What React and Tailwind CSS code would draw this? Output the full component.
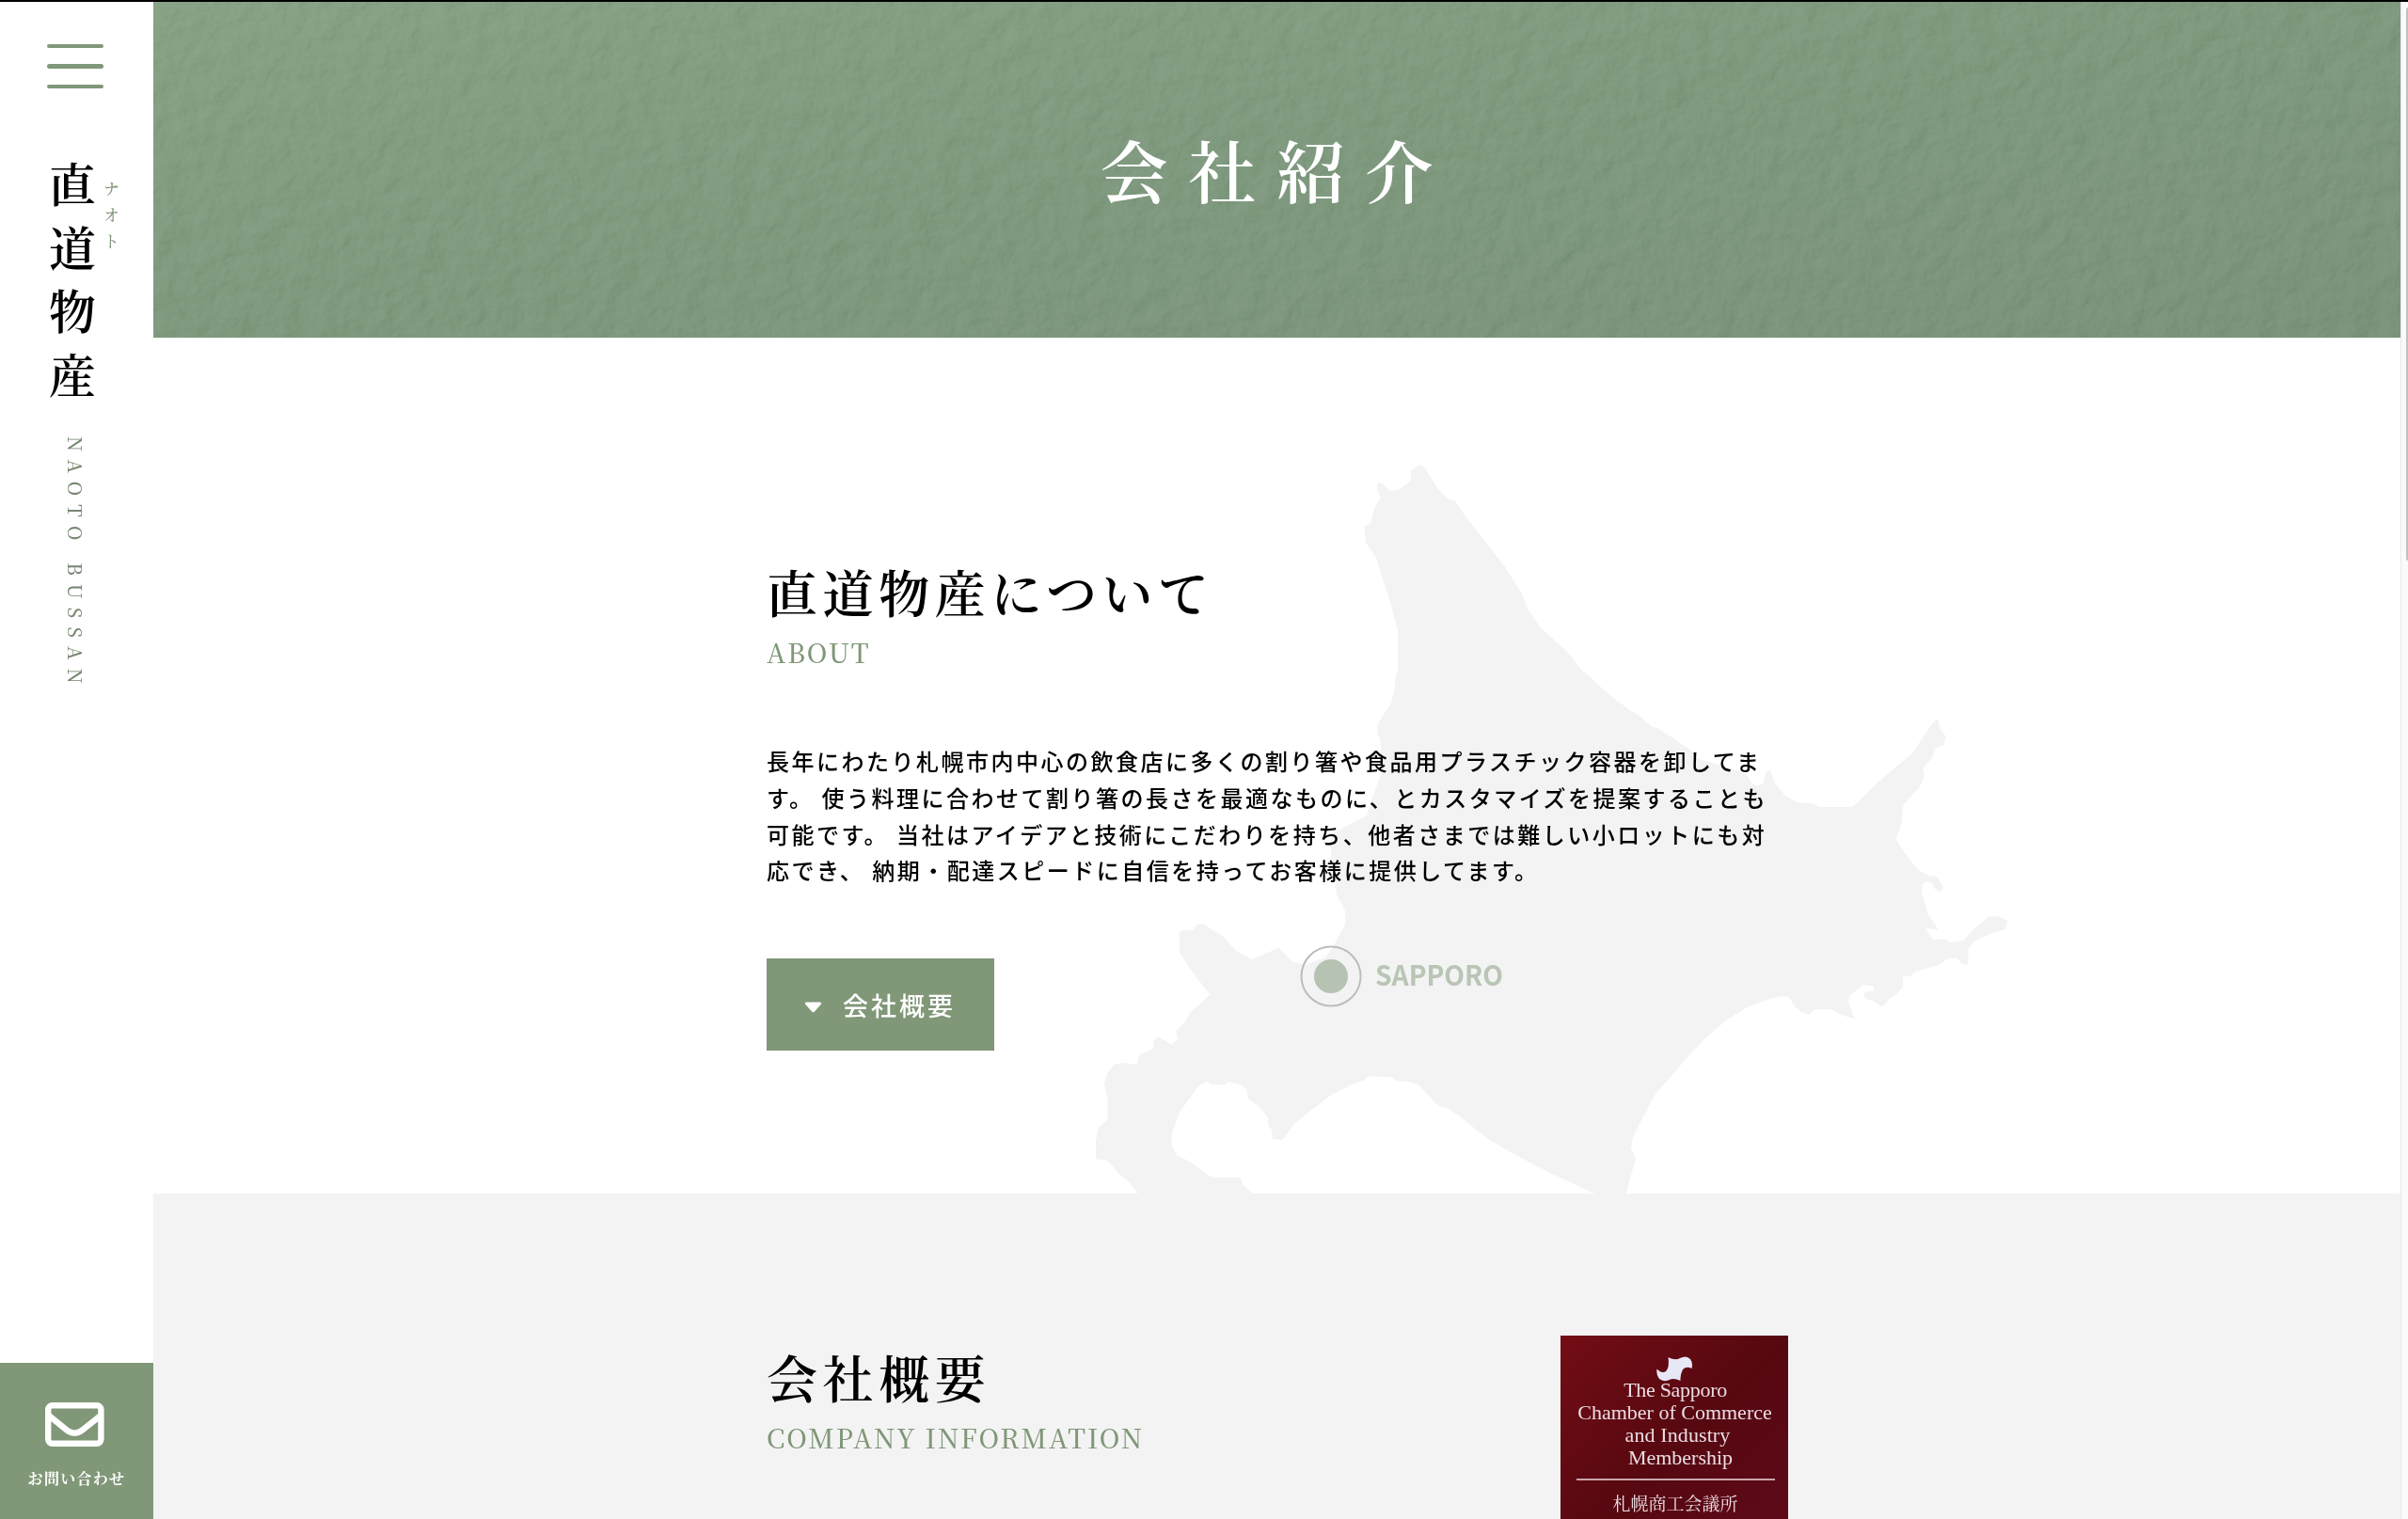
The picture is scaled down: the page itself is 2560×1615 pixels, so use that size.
const SERIF_JP = "font-['Noto_Serif_CJK_JP','Noto_Serif_JP','Noto_Sans_CJK_JP',serif]";
const SERIF = "font-['Liberation_Serif',serif]";

const HOKKAIDO =
  "M1509.3 494L1514.6 497.3L1529 520L1539.6 530.7L1546.8 532.3L1557.5 548.3L1577 573.3L1600.4 603.3L1618.2 631.7L1625.4 650L1637.9 667.3L1668.2 695L1680 710.7L1712.5 740L1734 756L1741 759.3L1755.4 772.3L1762.5 774.3L1796.7 796.7L1805 806.7L1833 815L1856.7 822.7L1861.7 831.7L1867.3 835.7L1875 832.7L1877.3 820L1882.3 819.3L1887.3 833.3L1898 846L1910.7 853.3L1926.8 854L1933.9 858L1967.9 858L1975 853.3L1996.4 831.7L2033.9 800L2053.6 770L2060 764L2063.2 776L2068.6 782.7L2066.8 791.7L2057 796L2054.3 805L2044.6 816.7L2045.7 825L2041 836.7L2026.8 851.7L2023.2 856.7L2021.4 876.7L2015.4 891.7L2025 906.7L2039.3 925L2050 930.7L2058.9 931.7L2066 943.3L2062.5 949L2057 945L2053.6 939L2048.2 936.7L2042.9 941.7L2042.9 950L2047 960L2048.6 970L2060.7 988.3L2046.4 987.3L2055.4 999.3L2067.9 998.3L2073.2 1002L2087.5 1000L2094.6 991.7L2107 980.7L2114.3 974.3L2125 974.3L2134.6 979.3L2132 988.3L2117.9 991.7L2100 1000L2092.9 1008.3L2091.8 1026L2086.4 1025L2080.4 1019L2071.4 1019L2060.7 1026L2035.7 1033.3L2031.4 1037.7L2023.2 1038.3L2023.2 1050L2014.3 1058.3L2008.9 1061.7L2003.6 1068.3L1999.3 1070L1992.9 1065L1982.9 1061.7L1981.4 1055L1992.9 1053.3L1991 1048.3L1980.4 1047.3L1967 1058.3L1965 1063.3L1967.9 1073.3L1972 1083.3L1957 1079L1946.4 1073.3L1928.6 1073.3L1923.2 1078.7L1916 1076.7L1907.9 1070L1901.8 1060L1892.9 1059L1878.6 1062.7L1857 1071L1835.7 1084.3L1814.3 1102.7L1792.9 1125L1780.4 1140L1760 1163L1748 1185L1736 1209L1734 1221L1739 1232L1734 1249L1729 1269L1695.4 1269L1675.7 1260L1654 1250L1615 1230L1582.9 1211.7L1550.7 1186L1538 1178L1529.3 1176L1507.9 1153.3L1497 1150L1484.6 1149L1479.3 1145L1454.3 1144.3L1450.7 1148.3L1436.4 1153.3L1415 1164.3L1397 1178.3L1375.7 1195L1363.2 1212.3L1353.2 1210.7L1351.4 1200L1348.2 1196.7L1348.2 1188.3L1340 1178.3L1326.4 1167.3L1325.7 1158.3L1318.6 1153.3L1306 1150L1302.5 1153.3L1288.2 1153.3L1282.9 1150L1273.9 1155L1263.2 1170L1254.3 1181.7L1245.4 1206.7L1246 1218.3L1251.4 1228.3L1265 1235L1288.2 1251.7L1318.6 1251.7L1322 1260L1331.8 1269L1209.6 1269L1198.9 1255L1190 1248.3L1177.5 1234L1165 1232.3L1165 1213.3L1167.5 1200L1177.5 1190L1177.5 1170L1173.9 1151.7L1177.5 1140L1184.6 1131.7L1193.6 1130L1208.6 1131.7L1211.4 1121.7L1225.7 1115L1226.8 1105L1232 1102.3L1245.4 1110.7L1252.5 1104L1250 1096.7L1259.6 1086.7L1265 1076.7L1286.4 1057.7L1265 1030L1254.3 1012.7L1253.6 991.7L1257.9 988.3L1268.6 989L1272 983.3L1279.3 982.3L1300.7 996L1315 1011.7L1331 1020L1359.6 1007.7L1373.9 1022.3L1386.4 1026L1407.9 1018.3L1416.8 1008.3L1423.9 993.3L1430 983.3L1430 968.3L1420.7 950L1420 936.7L1415 910L1415 886.7L1431.7 878.3L1453.3 866.7L1458 850L1468.3 823L1468.3 790L1464.3 780L1464.5 770L1479 746.7L1482.5 733.3L1483.2 720L1486 713.3L1486 670L1477 636.7L1462.9 593.3L1452 576.7L1450.4 560L1457.5 556.7L1461 540L1468.2 529L1463.6 521.7L1464.6 513.3L1470 514.3L1477 521.7L1486 521L1499.3 511.7L1500.4 500Z";

const ABOUT_LINES = [
  "長年にわたり札幌市内中心の飲食店に多くの割り箸や食品用プラスチック容器を卸してま",
  "す。 使う料理に合わせて割り箸の長さを最適なものに、とカスタマイズを提案することも",
  "可能です。 当社はアイデアと技術にこだわりを持ち、他者さまでは難しい小ロットにも対",
  "応でき、 納期・配達スピードに自信を持ってお客様に提供してます。",
];

function Sidebar() {
  return (
    <aside className="flex w-[163px] shrink-0 flex-col bg-white">
      <button className="mt-[45px] ml-[50px] flex w-[60px] flex-col gap-[17px]" aria-label="メニュー">
        <span className="h-[4.3px] w-full rounded-full bg-[#809778]" />
        <span className="h-[4.3px] w-full rounded-full bg-[#809778]" />
        <span className="h-[4.3px] w-full rounded-full bg-[#809778]" />
      </button>
      <div className="mt-[77px] ml-[50px] flex h-[280px] items-start">
        <p className={`${SERIF_JP} w-[54px] text-[50px] leading-[54px] font-semibold tracking-[17.6px] whitespace-nowrap text-black [writing-mode:vertical-rl]`}>直道物産</p>
        <p className={`${SERIF_JP} mt-[21px] ml-[2px] w-6 text-[17px] leading-6 font-medium tracking-[10.8px] whitespace-nowrap text-[#809778] [writing-mode:vertical-rl]`}>ナオト</p>
      </div>
      <p className={`${SERIF_JP} mt-[13px] ml-[66px] w-7 text-[20px] leading-7 font-medium tracking-[9.4px] whitespace-nowrap text-[#758770] [writing-mode:vertical-rl]`}>NAOTO BUSSAN</p>
      <a className="mt-auto flex h-[166px] flex-col items-center bg-[#809778] pr-0.5 text-white">
        <svg className="mt-[42px] mr-0.5 h-[47px] w-[63px]" viewBox="0 0 63 47" fill="none" stroke="currentColor" strokeWidth="6.4">
          <rect x="3.2" y="3.2" width="56.2" height="40.6" rx="4.5" />
          <path d="M4 14L23 29.500Q31.300 36 39.500 29.500L59 14" />
        </svg>
        <span className={`${SERIF_JP} mt-[22px] ml-0.5 text-[16px] leading-6 font-bold tracking-[1.3px] whitespace-nowrap`}>お問い合わせ</span>
      </a>
    </aside>
  );
}

function Hero() {
  return (
    <header className="relative flex h-[357px] shrink-0 items-center justify-center bg-linear-to-br from-[#87a286] via-[#7f997f] to-[#7b937a]">
      <svg className="absolute inset-0 h-full w-full opacity-25 mix-blend-soft-light" aria-hidden="true">
        <filter id="paper" x="0" y="0" width="100%" height="100%" colorInterpolationFilters="sRGB">
          <feTurbulence type="fractalNoise" baseFrequency="0.04" numOctaves="4" seed="8" />
          <feDiffuseLighting lightingColor="#ffffff" surfaceScale="3" diffuseConstant="0.75">
            <feDistantLight azimuth="215" elevation="42" />
          </feDiffuseLighting>
        </filter>
        <rect width="100%" height="100%" filter="url(#paper)" />
      </svg>
      <h1 className={`${SERIF_JP} relative mb-[3px] text-[72px] leading-[90px] font-semibold tracking-[22px] text-white`}>会社紹介</h1>
    </header>
  );
}

function SectionTitle({ title, sub }) {
  return (
    <div>
      <h2 className={`${SERIF_JP} text-[54px] leading-[72px] font-semibold tracking-[5.6px] text-black`}>{title}</h2>
      <p className={`${SERIF_JP} mt-[10px] text-[28px] leading-9 font-medium tracking-[1.9px] text-[#809778]`}>{sub}</p>
    </div>
  );
}

function HokkaidoMap() {
  return (
    <svg className="absolute top-[131px] left-[997px] h-[779px] w-[980px]" viewBox="1160 490 980 779" aria-hidden="true">
      <path d={HOKKAIDO} fill="#f3f3f3" />
      <circle cx="1415" cy="1038" r="31.5" fill="none" stroke="#bcbdbb" strokeWidth="2" />
      <circle cx="1415" cy="1038" r="18" fill="#b6c3b2" />
      <text x="1462" y="1048" textLength="136" lengthAdjust="spacingAndGlyphs" fill="#b9c5b5" className="font-['Noto_Sans_CJK_JP',sans-serif] text-[30px] font-bold">SAPPORO</text>
    </svg>
  );
}

function About() {
  return (
    <section className="relative h-[910px] shrink-0 bg-white pt-[234px] pl-[652px]">
      <HokkaidoMap />
      <div className="relative flex flex-col items-start">
        <SectionTitle title="直道物産について" sub="ABOUT" />
        <div className="mt-[79px] font-['Noto_Sans_CJK_JP',sans-serif] text-[24px] leading-[38.8px] font-medium tracking-[2.5px] whitespace-nowrap text-black">
          {ABOUT_LINES.map((line) => (
            <p key={line}>{line}</p>
          ))}
        </div>
        <a className="mt-[74px] flex h-[98px] w-[242px] items-center bg-[#809778] pl-10 text-white">
          <svg className="mt-1.5 h-3 w-[19px]" viewBox="0 0 19 12" fill="currentColor">
            <path d="M2 .5h15q2 .3 1 2l-7 8q-1.500 1.500-3 0l-7-8Q0 .8 2 .5Z" />
          </svg>
          <span className="mt-0.5 ml-[22px] font-['Noto_Sans_CJK_JP',sans-serif] text-[27px] leading-10 font-medium tracking-[3px]">会社概要</span>
        </a>
      </div>
    </section>
  );
}

function MembershipPlate() {
  return (
    <div className={`${SERIF} flex h-[250px] w-[242px] flex-col items-center bg-linear-to-br from-[#730d15] via-[#560810] to-[#600a1b] text-[22px] leading-6 whitespace-nowrap text-[#ecdde4]`}>
      <svg className="mt-[22px] h-[27px] w-[39px]" viewBox="0 0 39 27" fill="#e6e8f6">
        <path d="M12.500 1Q20 5 25 2Q32-1.500 36 3Q39 7 37.500 13Q32 10 28 14Q25 20 25.500 26Q19 23 15 24.500Q8 28 3 24Q-.5 20 .5 13.500Q6 19 10 16Q14 12 12.500 1Z" />
      </svg>
      <p className="-mt-[3px] pl-0.5 tracking-[-0.3px]">The Sapporo</p>
      <p className="pl-px">Chamber of Commerce</p>
      <p className="pl-[7px] tracking-[0.1px]">and Industry</p>
      <p className="pl-[13px]">Membership</p>
      <div className="mt-[10px] ml-0.5 h-[2px] w-[211px] bg-[#c9a5ab]" />
      <p className={`${SERIF_JP} mt-[12px] ml-0.5 text-[19px]`}>札幌商工会議所</p>
    </div>
  );
}

function Company() {
  return (
    <section className="flex grow items-start overflow-hidden bg-[#f3f3f3] pl-[652px]">
      <div className="mt-[159px] w-[844px]">
        <SectionTitle title="会社概要" sub="COMPANY INFORMATION" />
      </div>
      <div className="mt-[151px]">
        <MembershipPlate />
      </div>
    </section>
  );
}

export default function App() {
  return (
    <div className="flex h-[1615px] w-[2560px] overflow-hidden border-t-2 border-black bg-white">
      <Sidebar />
      <main className="flex w-[2389px] flex-col">
        <Hero />
        <About />
        <Company />
      </main>
      <div className="flex w-2 justify-end overflow-hidden border-l border-[#e8e8e8] bg-[#fafafa]">
        <div className="mt-[6px] h-[588px] w-[2px] rounded-l-full bg-[#c1c1c1]" />
      </div>
    </div>
  );
}
